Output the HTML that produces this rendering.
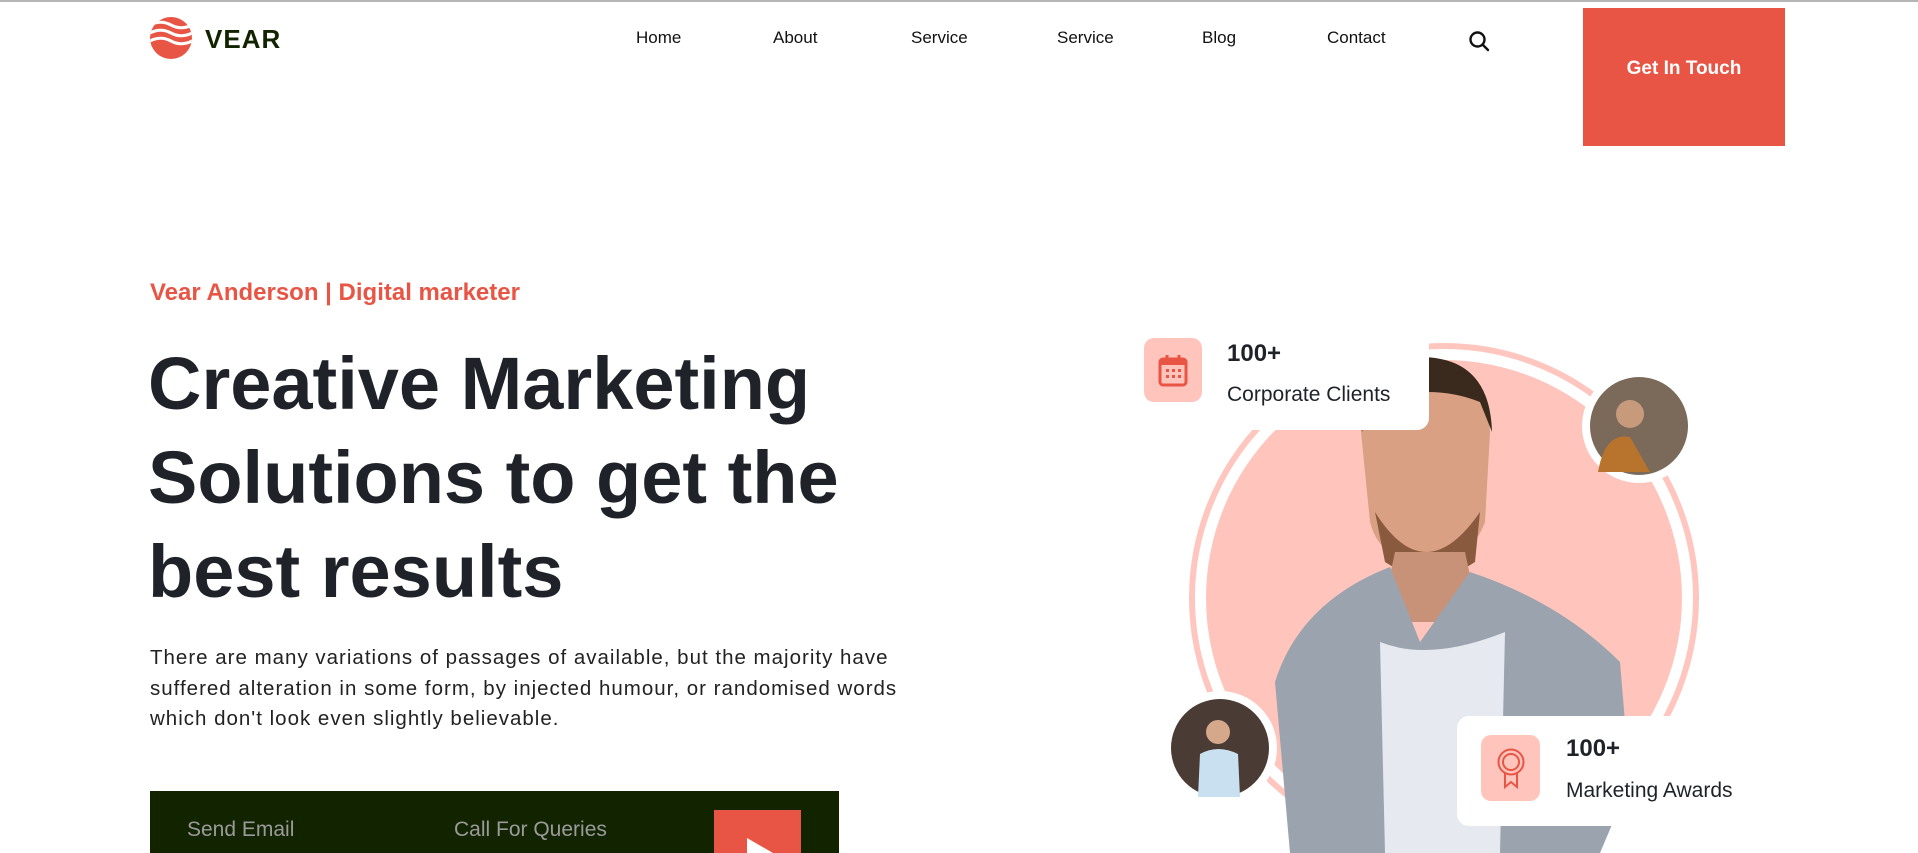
<!DOCTYPE html>
<html><head><meta charset="utf-8"><style>
*{margin:0;padding:0;box-sizing:border-box}
body{width:1918px;height:851px;overflow:hidden;background:#fff;font-family:"Liberation Sans",sans-serif;position:relative;border-top:2px solid #b5b5b5}
.a{position:absolute;white-space:nowrap}
.nav{top:26px;font-size:17px;color:#111;font-weight:500}
</style></head><body>
<svg class="a" style="left:150px;top:15px" width="42" height="42" viewBox="0 0 42 42">
<defs><clipPath id="c"><circle cx="21" cy="21" r="21"/></clipPath></defs>
<g clip-path="url(#c)"><rect width="42" height="42" fill="#e85545"/>
<path d="M-2 9 Q10 2 21 8 T44 7" stroke="#fff" stroke-width="3" fill="none"/>
<path d="M-2 17 Q10 10 21 16 T44 15" stroke="#fff" stroke-width="3" fill="none"/>
<path d="M-2 25 Q10 18 21 24 T44 23" stroke="#fff" stroke-width="3" fill="none"/></g></svg>
<div class="a" style="left:205px;top:22px;font-size:26px;font-weight:bold;color:#122300;letter-spacing:1px">VEAR</div>
<div class="a nav" style="left:636px">Home</div>
<div class="a nav" style="left:773px">About</div>
<div class="a nav" style="left:911px">Service</div>
<div class="a nav" style="left:1057px">Service</div>
<div class="a nav" style="left:1202px">Blog</div>
<div class="a nav" style="left:1327px">Contact</div>
<svg class="a" style="left:1468px;top:28px" width="22" height="22" viewBox="0 0 22 22"><circle cx="9.5" cy="9.5" r="7" stroke="#111" stroke-width="2.4" fill="none"/><path d="M15 15 L20 20" stroke="#111" stroke-width="2.4" stroke-linecap="round"/></svg>
<div class="a" style="left:1583px;top:6px;width:202px;height:138px;background:#e85545;color:#fff;font-size:19px;font-weight:bold;text-align:center;padding-top:50px">Get In Touch</div>

<div class="a" style="left:150px;top:277px;font-size:24px;font-weight:bold;color:#e85545">Vear Anderson | Digital marketer</div>
<div class="a" style="left:148px;top:335px;font-size:74px;line-height:94px;font-weight:bold;color:#1f2228">Creative Marketing<br>Solutions to get the<br>best results</div>
<div class="a" style="left:150px;top:641px;font-size:20.5px;line-height:30.5px;color:#222;letter-spacing:1px">There are many variations of passages of available, but the majority have<br>suffered alteration in some form, by injected humour, or randomised words<br>which don't look even slightly believable.</div>
<div class="a" style="left:150px;top:789px;width:689px;height:62px;background:#122300"></div>
<div class="a" style="left:187px;top:816px;font-size:21px;color:#9a9a9a">Send Email</div>
<div class="a" style="left:454px;top:816px;font-size:21px;color:#9a9a9a">Call For Queries</div>
<div class="a" style="left:714px;top:808px;width:87px;height:43px;background:#e85545"></div>
<svg class="a" style="left:745px;top:836px" width="30" height="15"><path d="M2 0 L28 15 L2 15Z" fill="#fff"/></svg>

<svg class="a" style="left:1140px;top:330px" width="580" height="521" viewBox="1140 330 580 521">
<circle cx="1444" cy="596" r="252" fill="none" stroke="#ffc6bf" stroke-width="6"/>
<circle cx="1444" cy="596" r="238" fill="#ffc5bd"/>
<path d="M1360 420 Q1360 360 1420 360 Q1485 358 1490 430 L1485 520 Q1470 560 1430 565 Q1380 560 1370 520Z" fill="#d9a083"/>
<path d="M1362 430 Q1355 360 1420 355 Q1490 355 1492 430 L1480 400 Q1430 380 1370 400Z" fill="#3a2a1e"/>
<path d="M1375 510 Q1425 590 1480 510 L1475 560 Q1430 590 1385 560Z" fill="#8a5a3e"/>
<path d="M1395 550 L1465 550 L1480 620 L1380 620Z" fill="#c89278"/>
<path d="M1290 851 L1275 680 Q1300 600 1390 565 L1420 640 L1470 570 Q1560 600 1620 660 L1630 780 L1600 851Z" fill="#9ba3ae"/>
<path d="M1380 640 Q1430 660 1505 630 L1500 851 L1385 851Z" fill="#e6e9ef"/>
<circle cx="1639" cy="424" r="57" fill="#fff"/><circle cx="1639" cy="424" r="49" fill="#7b6a5a"/>
<circle cx="1630" cy="412" r="14" fill="#c79a7c"/><path d="M1598 470 Q1605 430 1630 435 L1650 470Z" fill="#b8742c"/>
<circle cx="1220" cy="746" r="57" fill="#fff"/><circle cx="1220" cy="746" r="49" fill="#4a3b34"/>
<circle cx="1218" cy="730" r="12" fill="#d5a88c"/><path d="M1198 795 L1200 752 Q1218 742 1238 752 L1240 795Z" fill="#c8e0ef"/>
</svg>

<div class="a" style="left:1144px;top:336px;width:285px;height:92px;background:#fff;border-radius:0 0 12px 12px"></div>
<div class="a" style="left:1144px;top:336px;width:58px;height:64px;background:#ffc5bd;border-radius:10px"></div>
<svg class="a" style="left:1157px;top:352px" width="32" height="34" viewBox="0 0 32 34"><rect x="3" y="5" width="26" height="26" rx="3" fill="none" stroke="#e85545" stroke-width="3"/><rect x="3" y="5" width="26" height="6" fill="#e85545"/><path d="M10 1v7M22 1v7" stroke="#e85545" stroke-width="3"/><g fill="#e85545"><rect x="9" y="15" width="3" height="3"/><rect x="15" y="15" width="3" height="3"/><rect x="21" y="15" width="3" height="3"/><rect x="9" y="21" width="3" height="3"/><rect x="15" y="21" width="3" height="3"/><rect x="21" y="21" width="3" height="3"/></g></svg>
<div class="a" style="left:1227px;top:338px;font-size:24px;font-weight:bold;color:#1f2228">100+</div>
<div class="a" style="left:1227px;top:381px;font-size:21px;color:#1f2228">Corporate Clients</div>

<div class="a" style="left:1457px;top:714px;width:306px;height:110px;background:#fff;border-radius:12px"></div>
<div class="a" style="left:1481px;top:733px;width:59px;height:66px;background:#ffc5bd;border-radius:10px"></div>
<svg class="a" style="left:1496px;top:745px" width="30" height="44" viewBox="0 0 30 44"><circle cx="15" cy="15" r="12.5" fill="none" stroke="#e85545" stroke-width="2"/><circle cx="15" cy="15" r="8" fill="none" stroke="#e85545" stroke-width="2"/><path d="M9 26 L9 40 L15 35 L21 40 L21 26" fill="none" stroke="#e85545" stroke-width="2"/></svg>
<div class="a" style="left:1566px;top:733px;font-size:24px;font-weight:bold;color:#1f2228">100+</div>
<div class="a" style="left:1566px;top:777px;font-size:21px;color:#1f2228">Marketing Awards</div>
</body></html>
